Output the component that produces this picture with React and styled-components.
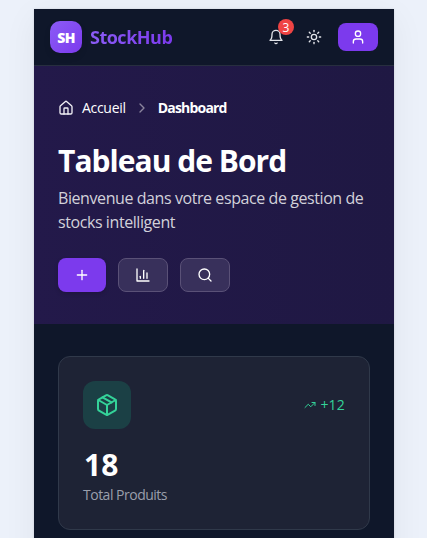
import React from "react";
import styled, { createGlobalStyle, css } from "styled-components";

const GlobalStyle = createGlobalStyle`
  *, *::before, *::after { box-sizing: border-box; }
  body {
    margin: 0;
    height: 538px;
    overflow: hidden;
    background: #ecf1fa;
    font-family: "Segoe UI", "Open Sans", "Noto Sans", sans-serif;
    color: #fff;
  }
  h1, p { margin: 0; }
`;

const Page = styled.div`
  height: 538px;
  padding: 9px 33px 0 34px;
  overflow: hidden;
`;

const Device = styled.div`
  height: 640px;
  background: #0f172a;
  box-shadow: 0 0 2px rgba(0, 0, 0, 0.12), 0 8px 32px rgba(15, 23, 42, 0.06);
`;

const Header = styled.header`
  display: flex;
  align-items: center;
  height: 57px;
  padding: 0 16px;
  border-bottom: 1px solid #272e3f;
`;

const Logo = styled.div`
  display: grid;
  place-items: center;
  width: 32px;
  height: 32px;
  border-radius: 10px;
  background: linear-gradient(135deg, #8b5cf6, #7c3aed);
  box-shadow: 0 4px 6px rgba(0, 0, 0, 0.1);
  font-size: 14px;
  font-weight: 800;
  letter-spacing: -0.6px;
`;

const Brand = styled.span`
  margin-left: 8px;
  font-size: 18px;
  font-weight: 700;
  line-height: 28px;
  letter-spacing: -0.5px;
  color: transparent;
  background: linear-gradient(90deg, #8b5cf6, #7c3aed);
  background-clip: text;
`;

const Actions = styled.div`
  display: flex;
  align-items: center;
  margin-left: auto;
  color: #e2e4e9;
`;

const IconButton = styled.button`
  position: relative;
  display: grid;
  place-items: center;
  width: 38px;
  height: 32px;
  padding: 0;
  border: 0;
  background: none;
  color: inherit;
`;

const Badge = styled.span`
  position: absolute;
  top: -2px;
  right: 1px;
  width: 16px;
  height: 16px;
  border-radius: 50%;
  background: #ef4444;
  color: #fff;
  font: 400 12px/17px "Segoe UI", "Open Sans", sans-serif;
  text-align: center;
`;

const ProfileButton = styled.button`
  display: grid;
  place-items: center;
  width: 40px;
  height: 28px;
  margin-left: 5px;
  padding: 0;
  border: 0;
  border-radius: 8px;
  background: #7c3aed;
  color: #fff;
`;

const Hero = styled.section`
  height: 258px;
  padding: 32px 24px;
  background: linear-gradient(90deg, #23194a, #1f1843);
`;

const Breadcrumb = styled.nav`
  display: flex;
  align-items: center;
  height: 20px;
  gap: 8px;
  font-size: 14px;
  line-height: 20px;
`;

const Crumb = styled.span`
  letter-spacing: -0.3px;
  ${(p) => p.$current && css`
    font-weight: 700;
    letter-spacing: -0.8px;
  `}
`;

const Title = styled.h1`
  margin-top: 25px;
  font-size: 30px;
  font-weight: 700;
  line-height: 36px;
  letter-spacing: -0.97px;
  white-space: nowrap;
`;

const Subtitle = styled.p`
  margin-top: 7px;
  font-size: 16px;
  line-height: 24px;
  letter-spacing: -0.42px;
  color: #d2d1da;
`;

const ButtonRow = styled.div`
  display: flex;
  gap: 12px;
  margin-top: 24px;
`;

const ActionButton = styled.button`
  display: grid;
  place-items: center;
  width: ${(p) => (p.$primary ? 48 : 50)}px;
  height: 34px;
  padding: 0;
  border: ${(p) => (p.$primary ? "0" : "1px solid #5a5177")};
  border-radius: 8px;
  background: ${(p) => (p.$primary ? "#7c3aed" : "#38305b")};
  box-shadow: ${(p) => (p.$primary ? "0 2px 4px rgba(0, 0, 0, 0.15)" : "none")};
  color: #fff;
`;

const Content = styled.main`
  padding: 32px 24px;
`;

const StatCard = styled.article`
  height: 174px;
  padding: 24px;
  border: 1px solid #30394a;
  border-radius: 12px;
  background: #1e2335;
`;

const StatTop = styled.div`
  display: flex;
  align-items: center;
  justify-content: space-between;
`;

const StatIcon = styled.div`
  display: grid;
  place-items: center;
  width: 48px;
  height: 48px;
  border-radius: 12px;
  background: #1b4045;
  color: #34d399;
`;

const Trend = styled.div`
  display: flex;
  align-items: center;
  gap: 4px;
  font-size: 14px;
  line-height: 20px;
  letter-spacing: 0.2px;
  color: #34d399;
`;

const StatValue = styled.p`
  margin-top: 16px;
  padding-left: 1px;
  font-size: 30px;
  font-weight: 700;
  line-height: 40px;
`;

const StatLabel = styled.p`
  font-size: 14px;
  line-height: 20px;
  letter-spacing: -0.5px;
  color: #9a9fab;
`;

const Svg = styled.svg`
  display: block;
  flex: none;
  fill: none;
  stroke: currentColor;
  stroke-linecap: round;
  stroke-linejoin: round;
`;

const shapes = {
  bell: ["M6 8a6 6 0 0 1 12 0c0 7 3 9 3 9H3s3-2 3-9", "M10.3 21a1.94 1.94 0 0 0 3.4 0"],
  sun: ["M8 12a4 4 0 1 0 8 0a4 4 0 1 0-8 0", "M12 2v2", "M12 20v2", "m4.93 4.93 1.41 1.41", "m17.66 17.66 1.41 1.41", "M2 12h2", "M20 12h2", "m6.34 17.66-1.41 1.41", "m19.07 4.93-1.41 1.41"],
  user: ["M19 21v-2a4 4 0 0 0-4-4H9a4 4 0 0 0-4 4v2", "M8 7a4 4 0 1 0 8 0a4 4 0 1 0-8 0"],
  home: ["M15 21v-8a1 1 0 0 0-1-1h-4a1 1 0 0 0-1 1v8", "M3 10a2 2 0 0 1 .709-1.528l7-5.999a2 2 0 0 1 2.582 0l7 5.999A2 2 0 0 1 21 10v9a2 2 0 0 1-2 2H5a2 2 0 0 1-2-2z"],
  chevron: ["m9 18 6-6-6-6"],
  plus: ["M5 12h14", "M12 5v14"],
  chart: ["M3 3v18h18", "M18 17V9", "M13 17V5", "M8 17v-3"],
  search: ["M3 11a8 8 0 1 0 16 0a8 8 0 1 0-16 0", "m21 21-4.3-4.3"],
  box: ["m7.5 4.27 9 5.15", "M21 8a2 2 0 0 0-1-1.73l-7-4a2 2 0 0 0-2 0l-7 4A2 2 0 0 0 3 8v8a2 2 0 0 0 1 1.73l7 4a2 2 0 0 0 2 0l7-4A2 2 0 0 0 21 16Z", "m3.3 7 8.7 5 8.7-5", "M12 22V12"],
  trend: ["m22 7-8.5 8.5-5-5L2 17", "M16 7h6v6"],
};

function Icon({ name, size = 16, weight = 2, color }) {
  return (
    <Svg width={size} height={size} viewBox="0 0 24 24" strokeWidth={weight} color={color} aria-hidden="true">
      {shapes[name].map((d) => <path key={d} d={d} />)}
    </Svg>
  );
}

export default function App() {
  return (
    <>
      <GlobalStyle />
      <Page>
        <Device>
          <Header>
            <Logo>SH</Logo>
            <Brand>StockHub</Brand>
            <Actions>
              <IconButton aria-label="Notifications">
                <Icon name="bell" />
                <Badge>3</Badge>
              </IconButton>
              <IconButton aria-label="Thème"><Icon name="sun" /></IconButton>
              <ProfileButton aria-label="Profil"><Icon name="user" /></ProfileButton>
            </Actions>
          </Header>
          <Hero>
            <Breadcrumb>
              <Icon name="home" color="#f1eff5" />
              <Crumb>Accueil</Crumb>
              <Icon name="chevron" color="#8b859d" />
              <Crumb $current>Dashboard</Crumb>
            </Breadcrumb>
            <Title>Tableau de Bord</Title>
            <Subtitle>Bienvenue dans votre espace de gestion de stocks intelligent</Subtitle>
            <ButtonRow>
              <ActionButton $primary aria-label="Ajouter"><Icon name="plus" /></ActionButton>
              <ActionButton aria-label="Rapports"><Icon name="chart" /></ActionButton>
              <ActionButton aria-label="Rechercher"><Icon name="search" /></ActionButton>
            </ButtonRow>
          </Hero>
          <Content>
            <StatCard>
              <StatTop>
                <StatIcon><Icon name="box" size={24} /></StatIcon>
                <Trend><Icon name="trend" size={12} />+12</Trend>
              </StatTop>
              <StatValue>18</StatValue>
              <StatLabel>Total Produits</StatLabel>
            </StatCard>
          </Content>
        </Device>
      </Page>
    </>
  );
}
